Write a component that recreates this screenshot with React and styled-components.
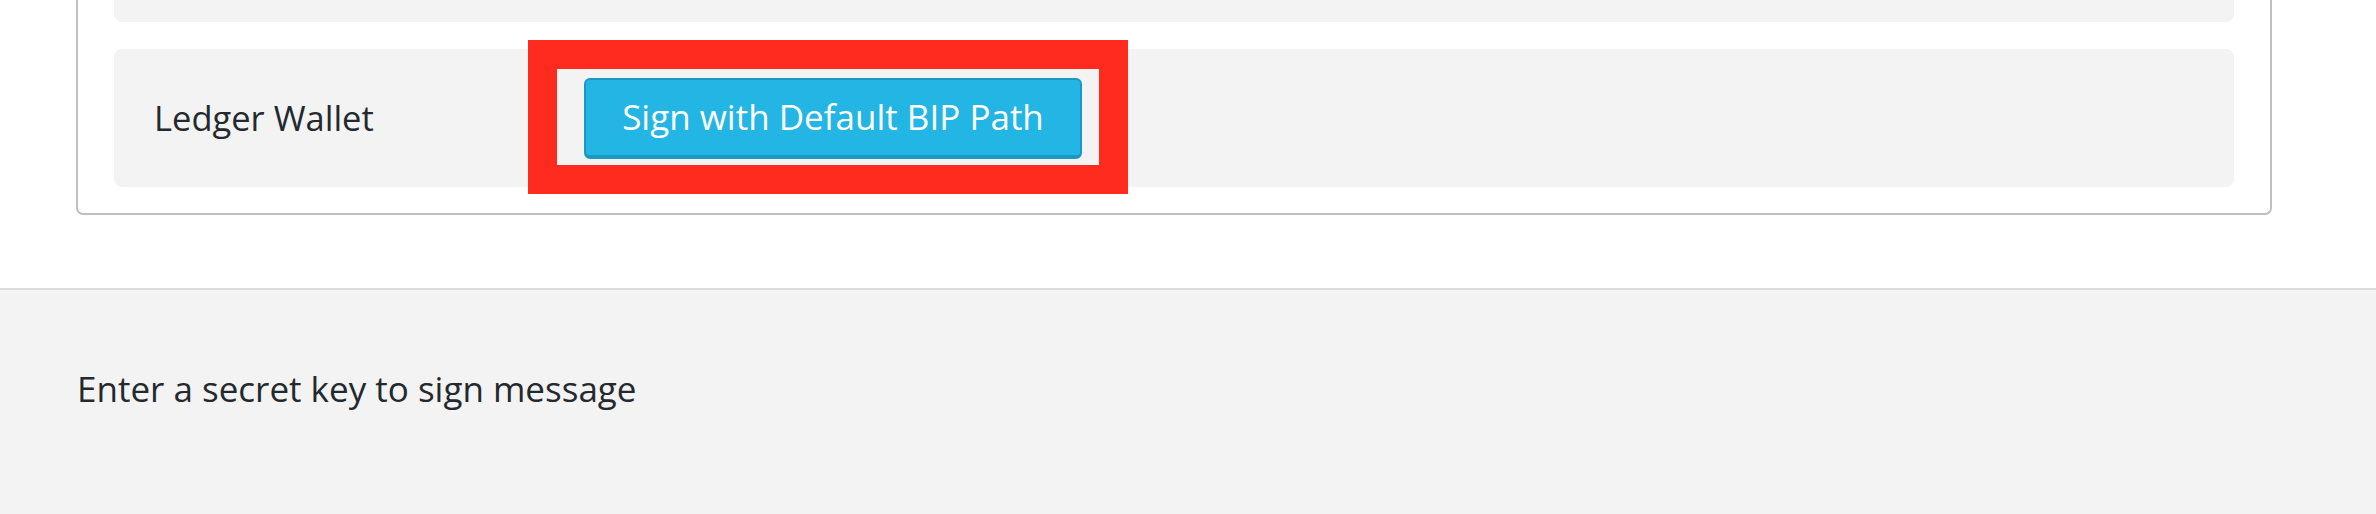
import React from "react";
import styled, { createGlobalStyle } from "styled-components";

const Global = createGlobalStyle`
  html, body { margin: 0; padding: 0; background: #ffffff; }
  body { font-family: "Open Sans", "Noto Sans", sans-serif; color: #24292e; }
  * { box-sizing: border-box; }
`;

const Top = styled.section`
  background: #ffffff;
  padding: 0 104px 73px 76px;
  border-bottom: 2px solid #dcdcdc;
`;

const Card = styled.div`
  width: 2196px;
  border: 2px solid #c0c0c0;
  border-top: none;
  border-radius: 0 0 7px 7px;
  padding: 0 36px 26px 36px;
  display: flex;
  flex-direction: column;
  gap: 27px;
`;

const Row = styled.div`
  background: #f3f3f3;
  border-radius: ${(p) => (p.$cut ? "0 0 8px 8px" : "8px")};
  height: ${(p) => p.$h}px;
  display: grid;
  grid-template-columns: 430px auto;
  align-items: center;
  padding-left: 40px;
`;

const Label = styled.span`
  font-size: 34.5px;
  line-height: 1;
  color: #24292e;
`;

const Highlight = styled.div`
  position: relative;
  justify-self: start;
  &::after {
    content: "";
    position: absolute;
    top: -38px;
    left: -56px;
    right: -46px;
    bottom: -35px;
    border: 29px solid #ff2b1f;
    pointer-events: none;
  }
`;

const Button = styled.button`
  display: flex;
  align-items: center;
  justify-content: center;
  width: 498px;
  height: 81px;
  background: #23b5e3;
  border: 2px solid #1b97c0;
  border-bottom-width: 4px;
  border-radius: 6px;
  color: #ffffff;
  font-family: "Open Sans", "Noto Sans", sans-serif;
  font-size: 35px;
  padding: 0 0 2px 0;
  cursor: pointer;
`;

const Bottom = styled.section`
  background: #f3f3f3;
  height: 224px;
  padding: 72px 76px 0 77px;
`;

const Prompt = styled.p`
  margin: 0;
  font-size: 35px;
  line-height: 54px;
  color: #24292e;
`;

export default function App() {
  return (
    <>
      <Global />
      <Top>
        <Card>
          <Row $cut $h={22} />
          <Row $h={138}>
            <Label>Ledger Wallet</Label>
            <Highlight>
              <Button>Sign with Default BIP Path</Button>
            </Highlight>
          </Row>
        </Card>
      </Top>
      <Bottom>
        <Prompt>Enter a secret key to sign message</Prompt>
      </Bottom>
    </>
  );
}
